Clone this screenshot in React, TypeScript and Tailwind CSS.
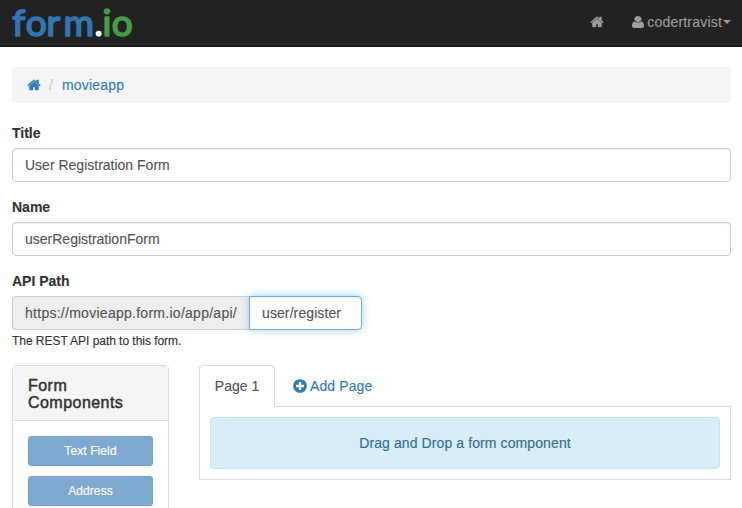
import React from "react";

const HOME =
  "M1472 992v480q0 26-19 45t-45 19h-384v-384h-256v384h-384q-26 0-45-19t-19-45v-480q0-1 .5-3t.5-3l575-474 575 474q1 2 1 6zm223-69l-62 74q-8 9-21 11h-3q-13 0-21-7l-692-577-692 577q-12 8-24 7-13-2-21-11l-62-74q-8-10-7-23.5t11-21.5l719-599q32-26 76-26t76 26l244 204v-195q0-14 9-23t23-9h192q14 0 23 9t9 23v408l219 182q10 8 11 21.5t-7 23.5z";
const USER =
  "M1536 1399q0 109-62.5 187t-150.5 78h-854q-88 0-150.5-78t-62.5-187q0-85 8.5-160.5t31.5-152 58.5-131 94-89 134.5-34.5q131 128 313 128t313-128q76 0 134.5 34.5t94 89 58.5 131 31.5 152 8.5 160.5zm-256-887q0 159-112.5 271.5t-271.5 112.5-271.5-112.5-112.5-271.5 112.5-271.5 271.5-112.5 271.5 112.5 112.5 271.5z";
const PLUS =
  "M1344 960v-128q0-26-19-45t-45-19h-256v-256q0-26-19-45t-45-19h-128q-26 0-45 19t-19 45v256h-256q-26 0-45 19t-19 45v128q0 26 19 45t45 19h256v256q0 26 19 45t45 19h128q26 0 45-19t19-45v-256h256q26 0 45-19t19-45zm320-64q0 209-103 385.5t-279.5 279.5-385.5 103-385.5-103-279.5-279.5-103-385.5 103-385.5 279.5-279.5 385.5-103 385.5 103 279.5 279.5 103 385.5z";

function Icon({
  d,
  className = "size-3.5",
  viewBox = "0 0 1792 1792",
  strokeWidth = 0,
}: {
  d: string;
  className?: string;
  viewBox?: string;
  strokeWidth?: number;
}) {
  return (
    <svg
      viewBox={viewBox}
      preserveAspectRatio="none"
      fill="currentColor"
      stroke="currentColor"
      strokeWidth={strokeWidth}
      aria-hidden="true"
      className={`shrink-0 ${className}`}
    >
      <path d={d} />
    </svg>
  );
}

function Logo() {
  return (
    <svg
      width="130"
      height="46"
      viewBox="0 0 130 46"
      className="overflow-visible font-['Lato',sans-serif] text-[37px]"
      strokeLinejoin="round"
      strokeWidth="1.7"
    >
      <text y="35.5" x="0.3 13.8 34.6 51.4 82.2 90.4 99.8">
        <tspan fill="#3276b1" stroke="#3276b1">form</tspan>
        <tspan fill="#fff" stroke="#fff" strokeWidth="1.2">.</tspan>
        <tspan fill="#449d44" stroke="#449d44">io</tspan>
      </text>
    </svg>
  );
}

function Field({ label, value }: { label: string; value: string }) {
  return (
    <div className="mb-[15px]">
      <label className="mb-[5px] block font-bold">{label}</label>
      <input
        defaultValue={value}
        className="block h-[34px] w-full rounded border border-[#ccc] bg-white px-3 text-[#555] shadow-[inset_0_1px_1px_rgba(0,0,0,.075)] outline-none"
      />
    </div>
  );
}

export default function App() {
  return (
    <div className="h-[508px] overflow-hidden bg-white font-['Liberation_Sans',Arial,sans-serif] text-sm leading-5 text-[#333] [-webkit-text-stroke:0.15px]">
      <nav className="flex h-[47px] items-start justify-between border-b border-[#121212] bg-[#222] pr-[11px] pl-3 text-[#9d9d9d]">
        <Logo />
        <div className="flex h-11 items-center">
          <Icon d={HOME} strokeWidth={60} />
          <div className="ml-7 flex items-center">
            <Icon d={USER} viewBox="256 128 1280 1536" className="size-3" />
            <span className="ml-[3px] tracking-[0.2px]">codertravist</span>
            <span className="ml-px border-x-4 border-t-4 border-x-transparent border-t-[#9d9d9d]" />
          </div>
        </div>
      </nav>

      <main className="pt-5 pr-[11px] pl-3">
        <div className="mb-5 flex h-9 items-center rounded bg-[#f5f5f5] px-[15px] text-[#337ab7]">
          <Icon d={HOME} strokeWidth={60} />
          <span className="ml-2 text-[#ccc]">/</span>
          <span className="ml-[9px] tracking-[0.2px]">movieapp</span>
        </div>

        <Field label="Title" value="User Registration Form" />
        <Field label="Name" value="userRegistrationForm" />

        <label className="mb-[5px] block font-bold">API Path</label>
        <div className="flex h-[34px]">
          <span className="flex w-[237px] items-center rounded-l border border-r-0 border-[#ccc] bg-[#eee] pl-3 tracking-[0.27px] text-[#555]">
            https://movieapp.form.io/app/api/
          </span>
          <input
            defaultValue="user/register"
            className="w-[113px] rounded-r border border-[#66afe9] px-3 tracking-[0.1px] text-[#555] shadow-[inset_0_1px_1px_rgba(0,0,0,.075),0_0_8px_rgba(102,175,233,.6)] outline-none"
          />
        </div>
        <p className="mt-px text-xs leading-5 tracking-[-0.04px]">The REST API path to this form.</p>

        <div className="mt-3.5 flex items-start gap-[30px]">
          <aside className="h-[160px] w-[157px] shrink-0 rounded border border-[#ddd]">
            <h3 className="h-[55px] border-b border-[#ddd] bg-[#f5f5f5] px-[15px] pt-[11px] text-base leading-[17px] font-medium tracking-[0.46px] [-webkit-text-stroke:0.5px_#333]">
              Form
              <br />
              Components
            </h3>
            <div className="flex flex-col gap-2.5 p-[15px] text-xs text-white">
              <button className="h-[30px] rounded-[3px] border border-[#75a1c9] bg-[#7fa9cf] tracking-[0.1px]">Text Field</button>
              <button className="h-[30px] rounded-[3px] border border-[#75a1c9] bg-[#7fa9cf] tracking-[0.1px]">Address</button>
            </div>
          </aside>

          <section className="grow">
            <div className="flex h-[41px]">
              <div className="z-10 -mb-px flex w-[76px] justify-center rounded-t border border-b-0 border-[#ddd] bg-white pt-2.5 text-[#555]">
                Page 1
              </div>
              <div className="ml-[17px] flex items-center text-[#337ab7]">
                <Icon d={PLUS} className="size-4" />
                <span className="ml-0.5 tracking-[0.1px]">Add Page</span>
              </div>
            </div>
            <div className="h-[74px] border border-[#ddd] p-2.5">
              <div className="flex h-[52px] items-center justify-center rounded border border-[#bce8f1] bg-[#d9edf7] tracking-[0.1px] text-[#31708f]">
                Drag and Drop a form component
              </div>
            </div>
          </section>
        </div>
      </main>
    </div>
  );
}
